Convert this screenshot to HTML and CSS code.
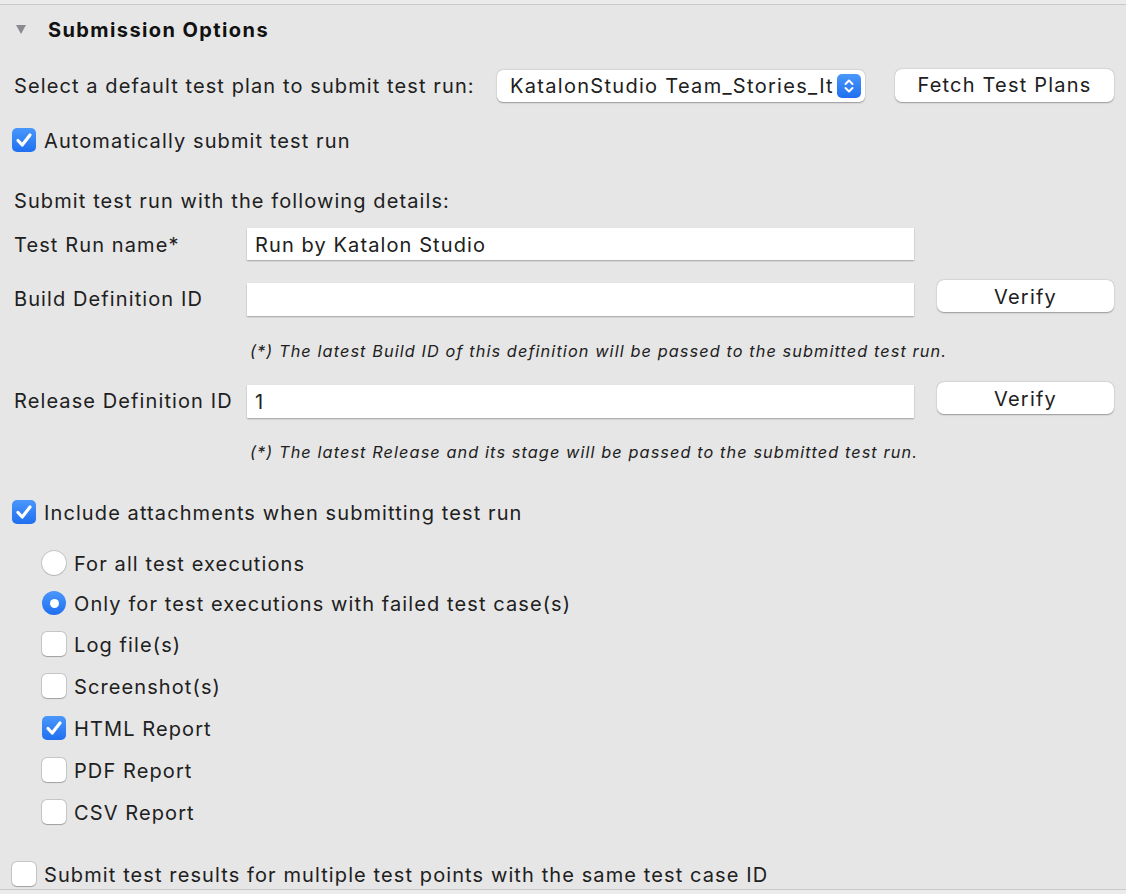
FILE: index.html
```html
<!DOCTYPE html>
<html>
<head>
<meta charset="utf-8">
<link rel="stylesheet" href="styles.css">
</head>
<body>
<div class="topbar"></div>
<div class="panel">
  <div class="header">
    <span class="disclosure"></span>
    <span class="title">Submission Options</span>
  </div>

  <div class="row-plan">
    <span class="plan-label">Select a default test plan to submit test run:</span>
    <div class="select">
      <span class="select-text">KatalonStudio Team_Stories_It</span>
      <span class="stepper">
        <svg width="24" height="24" viewBox="0 0 24 24"><path d="M8.5 10 L12 6.5 L15.5 10" fill="none" stroke="#fff" stroke-width="2" stroke-linecap="round" stroke-linejoin="round"/><path d="M8.5 14 L12 17.5 L15.5 14" fill="none" stroke="#fff" stroke-width="2" stroke-linecap="round" stroke-linejoin="round"/></svg>
      </span>
    </div>
    <button class="btn btn-fetch">Fetch Test Plans</button>
  </div>

  <div class="check-row auto-row">
    <span class="box checked"><svg width="24" height="24" viewBox="0 0 24 24"><path d="M6 12.5 L10.2 17 L18 7" fill="none" stroke="#fff" stroke-width="3.2" stroke-linecap="round" stroke-linejoin="round"/></svg></span>
    <span class="check-label">Automatically submit test run</span>
  </div>

  <div class="details-title">Submit test run with the following details:</div>

  <div class="form-row run-row">
    <span class="form-label">Test Run name*</span>
    <div class="input">Run by Katalon Studio</div>
  </div>

  <div class="form-row build-row">
    <span class="form-label">Build Definition ID</span>
    <div class="input"></div>
    <button class="btn btn-verify">Verify</button>
  </div>
  <div class="note note-build">(*) The latest Build ID of this definition will be passed to the submitted test run.</div>

  <div class="form-row release-row">
    <span class="form-label">Release Definition ID</span>
    <div class="input">1</div>
    <button class="btn btn-verify">Verify</button>
  </div>
  <div class="note note-release">(*) The latest Release and its stage will be passed to the submitted test run.</div>

  <div class="check-row include-row">
    <span class="box checked"><svg width="24" height="24" viewBox="0 0 24 24"><path d="M6 12.5 L10.2 17 L18 7" fill="none" stroke="#fff" stroke-width="3.2" stroke-linecap="round" stroke-linejoin="round"/></svg></span>
    <span class="check-label">Include attachments when submitting test run</span>
  </div>

  <div class="options">
    <div class="check-row opt radio-first">
      <span class="radio"></span>
      <span class="check-label">For all test executions</span>
    </div>
    <div class="check-row opt radio-second">
      <span class="radio selected"><span class="dot"></span></span>
      <span class="check-label">Only for test executions with failed test case(s)</span>
    </div>
    <div class="check-row opt opt-first-box">
      <span class="box"></span>
      <span class="check-label">Log file(s)</span>
    </div>
    <div class="check-row opt">
      <span class="box"></span>
      <span class="check-label">Screenshot(s)</span>
    </div>
    <div class="check-row opt">
      <span class="box checked"><svg width="24" height="24" viewBox="0 0 24 24"><path d="M6 12.5 L10.2 17 L18 7" fill="none" stroke="#fff" stroke-width="3.2" stroke-linecap="round" stroke-linejoin="round"/></svg></span>
      <span class="check-label">HTML Report</span>
    </div>
    <div class="check-row opt">
      <span class="box"></span>
      <span class="check-label">PDF Report</span>
    </div>
    <div class="check-row opt">
      <span class="box"></span>
      <span class="check-label">CSV Report</span>
    </div>
  </div>

  <div class="check-row multi-row">
    <span class="box"></span>
    <span class="check-label">Submit test results for multiple test points with the same test case ID</span>
  </div>
  <div class="bottom-line"></div>
</div>
</body>
</html>
```

FILE: styles.css
```css
* { box-sizing: border-box; }

html, body {
  margin: 0;
  padding: 0;
  background: #e6e6e6;
}

body {
  font-family: "Inter", "Liberation Sans", sans-serif;
  font-size: 20px;
  letter-spacing: 1.1px;
  color: #202020;
  width: 1126px;
  height: 894px;
  overflow: hidden;
}

.topbar {
  height: 5px;
  background: #ebebeb;
  border-bottom: 1px solid #c9c9c9;
}

.panel {
  padding: 0 12px 0 14px;
}

.header {
  height: 50px;
  display: flex;
  align-items: center;
}

.disclosure {
  width: 0;
  height: 0;
  margin-left: 2px;
  border-left: 5px solid transparent;
  border-right: 5px solid transparent;
  border-top: 9px solid #8b8b8f;
  margin-top: -1px;
}

.title {
  margin-left: 22px;
  font-weight: 700;
  font-size: 20px;
  letter-spacing: 1.4px;
  color: #111;
}

.row-plan {
  height: 60px;
  display: flex;
  align-items: center;
  padding-top: 2px;
}

.plan-label {
  width: 483px;
  white-space: nowrap;
}

.select {
  width: 368px;
  height: 32px;
  background: #fff;
  border-radius: 6px;
  box-shadow: 0 0.5px 1.5px rgba(0, 0, 0, 0.35);
  display: flex;
  align-items: center;
  padding-left: 13px;
  padding-right: 4px;
}

.select-text {
  flex: 1;
  white-space: nowrap;
  overflow: hidden;
  letter-spacing: 1.3px;
}

.stepper {
  width: 24px;
  height: 24px;
  border-radius: 5px;
  background: linear-gradient(#4a97fb, #1f6ff0);
  display: flex;
  flex-shrink: 0;
  margin-left: 2px;
}

.btn {
  font-family: inherit;
  font-size: 20px;
  letter-spacing: 1.2px;
  color: #202020;
  background: #fff;
  border: none;
  border-radius: 7px;
  box-shadow: 0 0.5px 1.5px rgba(0, 0, 0, 0.35);
  padding: 0;
}

.btn-fetch {
  margin-left: 30px;
  width: 219px;
  height: 33px;
  margin-top: -2px;
}

.check-row {
  display: flex;
  align-items: center;
  height: 24px;
}

.auto-row {
  margin-top: 13px;
  margin-left: -2px;
}

.box {
  width: 24px;
  height: 24px;
  border-radius: 5px;
  background: #fff;
  box-shadow: 0 0 0 1px rgba(0, 0, 0, 0.12), 0 0.5px 1px rgba(0, 0, 0, 0.2);
  display: flex;
  flex-shrink: 0;
}

.box.checked {
  background: linear-gradient(#4a97fb, #1f6ff0);
  box-shadow: none;
}

.radio {
  width: 24px;
  height: 24px;
  border-radius: 50%;
  background: #fff;
  box-shadow: 0 0 0 1px rgba(0, 0, 0, 0.12), 0 0.5px 1px rgba(0, 0, 0, 0.2);
  display: flex;
  align-items: center;
  justify-content: center;
  flex-shrink: 0;
}

.radio.selected {
  background: linear-gradient(#4a97fb, #1f6ff0);
  box-shadow: none;
}

.dot {
  width: 9px;
  height: 9px;
  border-radius: 50%;
  background: #fff;
}

.check-label {
  margin-left: 8px;
  white-space: nowrap;
  padding-top: 2px;
}

.details-title {
  margin-top: 35px;
  height: 24px;
  line-height: 24px;
  padding-top: 2px;
}

.form-row {
  display: flex;
  align-items: center;
}

.form-label {
  width: 233px;
  flex-shrink: 0;
  white-space: nowrap;
  padding-top: 2px;
}

.input {
  width: 667px;
  height: 32px;
  background: #fff;
  box-shadow: 0 1px 1.5px rgba(0, 0, 0, 0.3);
  padding-left: 8px;
  line-height: 34px;
}

.run-row {
  margin-top: 17px;
  height: 32px;
}

.build-row {
  margin-top: 20px;
  height: 36px;
}

.build-row .input,
.release-row .input {
  height: 33px;
  line-height: 35px;
  margin-top: 3px;
}

.btn-verify {
  margin-left: 23px;
  width: 177px;
  height: 32px;
  margin-top: -4px;
  padding-top: 2px;
}

.note {
  font-style: italic;
  font-size: 16.3px;
  letter-spacing: 1.1px;
  margin-left: 236px;
  height: 20px;
  line-height: 22px;
  color: #202020;
  white-space: nowrap;
}

.note-build {
  margin-top: 24px;
}

.release-row {
  margin-top: 22px;
  height: 36px;
}

.note-release {
  margin-top: 23px;
}

.include-row {
  margin-top: 39px;
  margin-left: -2px;
}

.options {
  margin-left: 28px;
  margin-top: 27px;
  display: flex;
  flex-direction: column;
}

.opt + .opt {
  margin-top: 18px;
}

.opt.radio-second {
  margin-top: 16px;
}

.opt.opt-first-box {
  margin-top: 17px;
}

.multi-row {
  margin-top: 38px;
  margin-left: -2px;
}

.bottom-line {
  margin: 3px -12px 0 -14px;
  height: 5px;
  border-top: 1px solid #c9c9c9;
  background: #ebebeb;
}
```
